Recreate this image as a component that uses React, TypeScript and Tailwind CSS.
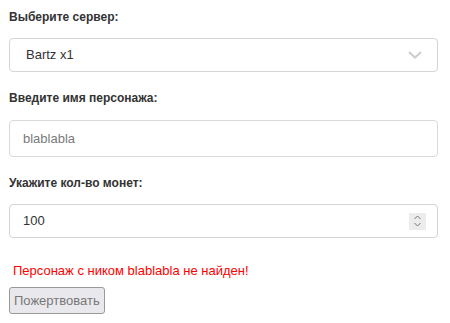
import React from "react";

export default function App() {
  return (
    <div className="w-[450px] h-[323px] bg-white pl-[9px] pr-[12px] pt-[10px] text-[#333]" style={{ fontFamily: '"Liberation Sans", Arial, sans-serif' }}>
      <div className="text-[12px] font-bold leading-[14px] text-[#333]">Выберите сервер:</div>
      <div className="mt-[14px] h-[34px] border border-[#d4d4d4] rounded-[4px] flex items-center justify-between pl-[16px] pr-[13px] bg-white">
        <span className="text-[13px] text-[#333]">Bartz x1</span>
        <svg width="16" height="10" viewBox="0 0 16 10" className="mr-[1px]">
          <path d="M2 2 L8 7.5 L14 2" fill="none" stroke="#cfcfcf" strokeWidth="2.2" />
        </svg>
      </div>
      <div className="mt-[19px] text-[12px] font-bold leading-[14px] text-[#333]">Введите имя персонажа:</div>
      <div className="mt-[15px] h-[37px] border border-[#d9d9d9] rounded-[4px] flex items-center pl-[13px]">
        <span className="text-[13px] text-[#7a7a7a]">blablabla</span>
      </div>
      <div className="mt-[19px] text-[12px] font-bold leading-[14px] text-[#333]">Укажите кол-во монет:</div>
      <div className="mt-[14px] h-[34px] border border-[#d4d4d4] rounded-[4px] flex items-center justify-between pl-[13px] pr-[11px]">
        <span className="text-[13px] text-[#333]">100</span>
        <div className="w-[17px] h-[17px] bg-[#ececec] flex items-center justify-center">
          <svg width="9" height="14" viewBox="0 0 9 14">
            <path d="M1.5 5 L4.5 2 L7.5 5" fill="none" stroke="#777" strokeWidth="1" />
            <path d="M1.5 9 L4.5 12 L7.5 9" fill="none" stroke="#777" strokeWidth="1" />
          </svg>
        </div>
      </div>
      <div className="mt-[25px] pl-[4px] text-[13px] leading-[16px] text-[#ff0000]">Персонаж с ником blablabla не найден!</div>
      <button className="mt-[8px] h-[27px] px-[4px] border border-[#999] rounded-[3px] bg-[#e9e9ed] text-[13px] text-[#777]" style={{ fontFamily: '"Liberation Sans", Arial, sans-serif' }}>Пожертвовать</button>
    </div>
  );
}
